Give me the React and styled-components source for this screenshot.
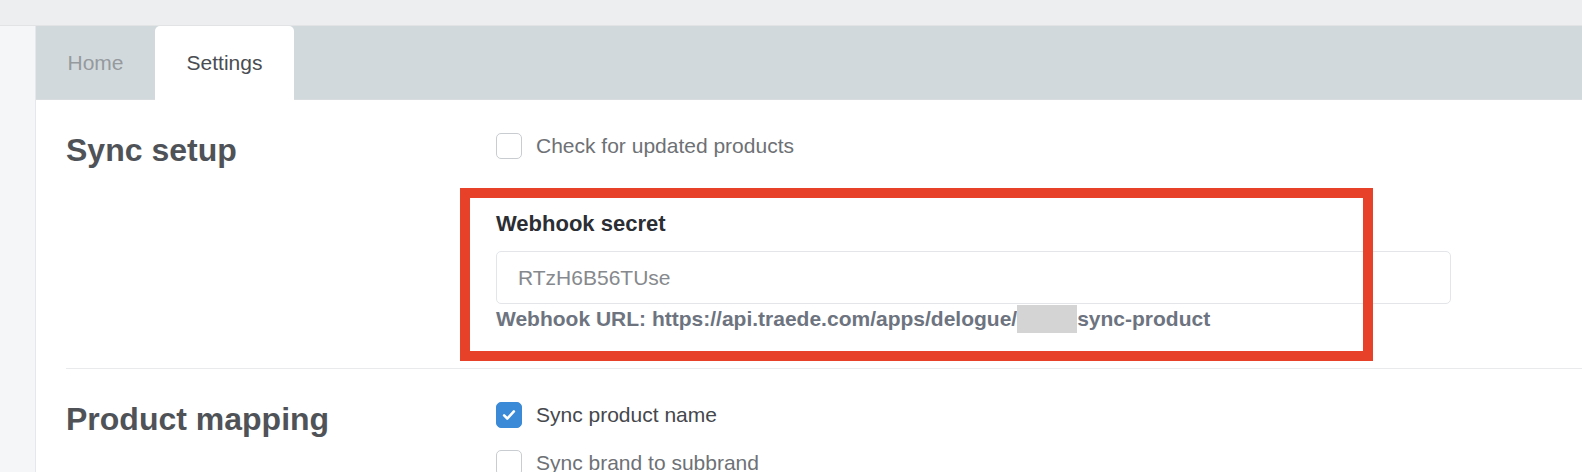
import React from "react";
import styled, { createGlobalStyle } from "styled-components";

const GlobalStyle = createGlobalStyle`
  * { box-sizing: border-box; }
  html, body { margin: 0; padding: 0; }
  body {
    font-family: "Liberation Sans", Arial, Helvetica, sans-serif;
    background-color: #ffffff;
    overflow: hidden;
  }
`;

const TopBar = styled.div`
  height: 26px;
  background-color: #edeef0;
  border-bottom: 1px solid #e1e3e5;
`;

const Layout = styled.div`
  display: flex;
  min-height: calc(100vh - 26px);
`;

const Sidebar = styled.aside`
  width: 36px;
  flex-shrink: 0;
  background-color: #f5f6f8;
  border-right: 1px solid #e5e7ea;
`;

const Main = styled.main`
  flex: 1;
  min-width: 0;
  background-color: #ffffff;
`;

const TabBar = styled.nav`
  display: flex;
  height: 74px;
  background-color: #d2d9dc;
  border-bottom: 1px solid #d8dcdf;
`;

const Tab = styled.div`
  display: flex;
  align-items: center;
  padding: 0 31.5px;
  font-size: 21px;
  color: ${(props) => (props.$active ? "#4a4d52" : "#959a9e")};
  background-color: ${(props) => (props.$active ? "#ffffff" : "transparent")};
  border-radius: ${(props) => (props.$active ? "5px 5px 0 0" : "0")};
  margin-bottom: ${(props) => (props.$active ? "-1px" : "0")};
  cursor: pointer;
`;

const Content = styled.div`
  padding-left: 30px;
`;

const Section = styled.section`
  display: grid;
  grid-template-columns: 430px minmax(0, 955px);
  padding: 31px 0 37px;
  border-bottom: ${(props) => (props.$last ? "none" : "1px solid #e9eaec")};
`;

const Heading = styled.h2`
  margin: 0;
  font-size: 32px;
  line-height: 38px;
  font-weight: 700;
  color: #4f5358;
`;

const Options = styled.div`
  display: flex;
  flex-direction: column;
  gap: 22px;
  padding-top: 2px;
`;

const CheckRow = styled.label`
  display: flex;
  align-items: center;
  gap: 14px;
  font-size: 21px;
  line-height: 24px;
  color: ${(props) => (props.$checked ? "#45484c" : "#6e7175")};
  cursor: pointer;
`;

const Box = styled.span`
  width: 26px;
  height: 26px;
  flex-shrink: 0;
  display: flex;
  align-items: center;
  justify-content: center;
  border-radius: 5px;
  border: 1px solid ${(props) => (props.$checked ? "#3a8ad8" : "#c9ccd0")};
  background-color: ${(props) => (props.$checked ? "#3a8ad8" : "#ffffff")};
`;

const FieldGroup = styled.div`
  position: relative;
  margin-top: 53px;
`;

const FieldLabel = styled.div`
  font-size: 22px;
  line-height: 24px;
  font-weight: 700;
  color: #2b2e33;
  margin-bottom: 15px;
`;

const TextInput = styled.input`
  display: block;
  width: 100%;
  height: 53px;
  padding: 0 21px;
  border: 1px solid #e3e5e8;
  border-radius: 5px;
  font-family: inherit;
  font-size: 21px;
  color: #86898d;
  background-color: #ffffff;
  outline: none;
`;

const UrlLine = styled.div`
  margin-top: 3px;
  font-size: 21px;
  line-height: 24px;
  font-weight: 700;
  color: #6d7480;
  white-space: nowrap;
`;

const Redacted = styled.span`
  display: inline-block;
  width: 60px;
  height: 24px;
  background-color: #d4d4d4;
  vertical-align: -5px;
  box-shadow: 0 2px 0 #d4d4d4, 0 -2px 0 #d4d4d4;
`;

/* red annotation frame drawn over the webhook fields */
const Highlight = styled.div`
  position: absolute;
  top: -24px;
  left: -36px;
  width: 913px;
  height: 173px;
  border: 10px solid #e8412a;
  pointer-events: none;
`;

const CheckIcon = () => (
  <svg width="18" height="18" viewBox="0 0 24 24" fill="none">
    <path
      d="M5.5 12.5l4.2 4.2 8.8-9.4"
      stroke="#ffffff"
      strokeWidth="3.4"
      strokeLinecap="round"
      strokeLinejoin="round"
    />
  </svg>
);

const Checkbox = ({ checked, label }) => (
  <CheckRow $checked={checked}>
    <Box $checked={checked}>{checked && <CheckIcon />}</Box>
    {label}
  </CheckRow>
);

const tabs = [
  { name: "Home", active: false },
  { name: "Settings", active: true },
];

const App = () => {
  return (
    <>
      <GlobalStyle />
      <TopBar />
      <Layout>
        <Sidebar />
        <Main>
          <TabBar>
            {tabs.map((tab) => (
              <Tab key={tab.name} $active={tab.active}>
                {tab.name}
              </Tab>
            ))}
          </TabBar>

          <Content>
            <Section>
              <Heading>Sync setup</Heading>
              <div>
                <Options>
                  <Checkbox label="Check for updated products" />
                </Options>
                <FieldGroup>
                  <FieldLabel>Webhook secret</FieldLabel>
                  <TextInput type="text" value="RTzH6B56TUse" readOnly />
                  <UrlLine>
                    Webhook URL: https://api.traede.com/apps/delogue/<Redacted />sync-product
                  </UrlLine>
                  <Highlight />
                </FieldGroup>
              </div>
            </Section>

            <Section $last>
              <Heading>Product mapping</Heading>
              <Options>
                <Checkbox checked label="Sync product name" />
                <Checkbox label="Sync brand to subbrand" />
              </Options>
            </Section>
          </Content>
        </Main>
      </Layout>
    </>
  );
};

export default App;
